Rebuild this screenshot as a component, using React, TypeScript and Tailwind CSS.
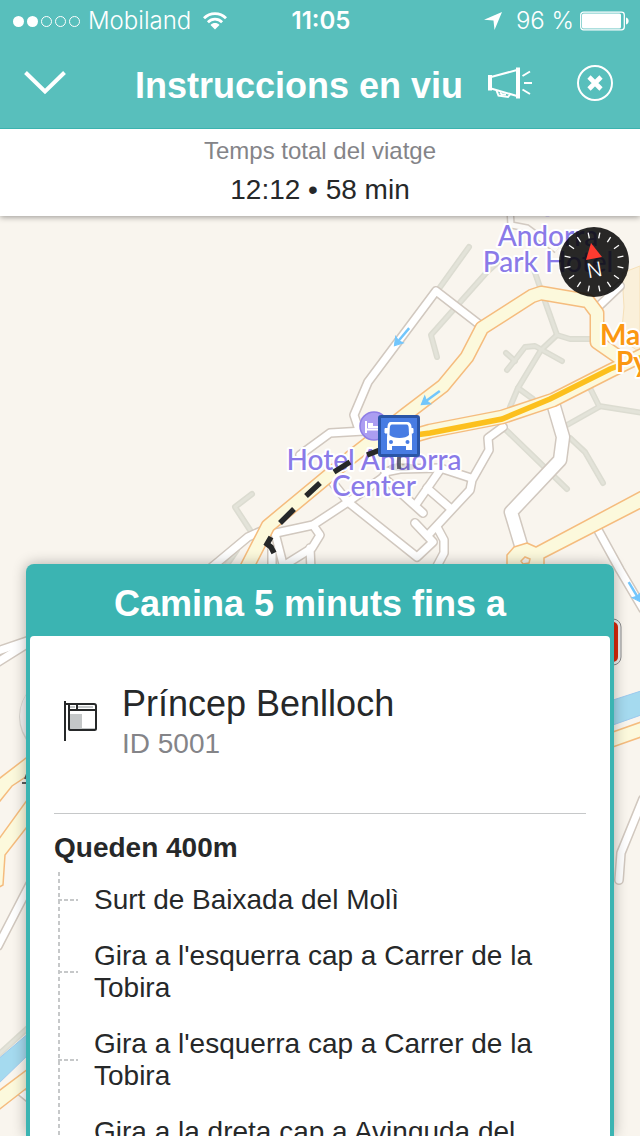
import React from 'react';

const steps = [
  "Surt de Baixada del Molì",
  "Gira a l'esquerra cap a Carrer de la Tobira",
  "Gira a l'esquerra cap a Carrer de la Tobira",
  "Gira a la dreta cap a Avinguda del",
];

// Road geometry, in map units
const lanes = [
  'M469 247L438 290',
  'M497 263L487 272L431 335L437 357',
  'M533 267L541 290L557 335L570 339H590',
  'M557 335L541 350L518 388L510 407',
  'M507 370L515 360L525 347L535 346L562 361',
  'M506 353L515 361',
  'M518 388L533 399',
  'M590 388L599 406L643 413',
  'M599 407L567 425',
  'M506 430L567 489',
  'M570 438L585 452L603 483',
  'M252 494L235 507L250 530',
  'M237 550L226 566',
  'M628 358L643 354',
  'M-2 1055L30 1026',
];

const streets = [
  'M480 325L436 291L368 382L354 415L359 430',
  'M300 455L330 433L364 431',
  'M196 580L218 562L248 537L266 529',
  'M276 533L313 525L348 502L385 476',
  'M313 525L320 535L312 548L288 563L270 575',
  'M310 548L311 570',
  'M275 533L284 568',
  'M272 550V570',
  'M348 502L333 483',
  'M348 502L417 557L433 542L415 523',
  'M383 477L423 513',
  'M417 503L440 470',
  'M427 488L450 508',
  'M385 472L400 469L440 468L471 478',
  'M503 427L488 438L489 450L472 480L470 490L430 533',
  'M437 527L444 540V553L436 568',
  'M598 530L620 570L643 609',
  'M643 799L621 853L619 880',
  'M600 305L620 286',
  'M-2 651L30 640',
  'M-2 662L30 642',
  'M-2 946L30 884',
  'M18 1089L34 1102',
];

const upperRoads = [
  'M247 567L268 526L350 458L405 415L443 386L467 357L482 328L532 296L541 293L588 301L597 313V342L620 358',
  'M378 446L430 431L502 417L553 400L610 371L645 354',
];

function RoadLayer({ roads, casing, fill, width }: { roads: string[]; casing: string; fill: string; width: number }) {
  return (
    <g fill="none" strokeLinecap="round" strokeLinejoin="round">
      {roads.map((d) => (
        <path key={d} d={d} stroke={casing} strokeWidth={width + 3} />
      ))}
      {roads.map((d) => (
        <path key={d} d={d} stroke={fill} strokeWidth={width} />
      ))}
    </g>
  );
}

function Arrow({ x, y, angle }: { x: number; y: number; angle: number }) {
  return (
    <g transform={`translate(${x} ${y}) rotate(${angle})`}>
      <path d="M2 0H22" stroke="#72c6fc" strokeWidth="2.500" />
      <path d="M-1 0L7 -5L5.500 0L7 5Z" fill="#72c6fc" stroke="#72c6fc" />
    </g>
  );
}

function Compass() {
  return (
    <g transform="translate(594 262)">
      <circle r="35" fill="#080808" fillOpacity="0.87" />
      {Array.from({ length: 16 }, (_, i) => (
        <path key={i} d="M0 -30V-24" stroke="#fff" strokeWidth="1.3" transform={`rotate(${i * 22.5 + 11.25})`} />
      ))}
      <path d="M-3 -19L-8 -2L8 -5Z" fill="#ff3b30" />
      <text
        x="-1"
        y="15"
        textAnchor="middle"
        transform="rotate(-10)"
        fill="#fff"
        className="font-['Inter',sans-serif] text-[20px] font-light"
      >
        N
      </text>
    </g>
  );
}

function BusMarker() {
  return (
    <g>
      <ellipse cx="402" cy="467" rx="14" ry="4" fill="#000" opacity="0.12" />
      <path d="M399 457V469" stroke="#555" strokeWidth="4" opacity="0.8" />
      <rect x="379.5" y="416.5" width="39" height="39" rx="1.5" fill="#477ce3" stroke="#2a55a6" strokeWidth="3" />
      <path
        d="M391 422H407C410 422 411.500 424 411.500 427L412 438V450H406V446H392V450H387V438L387.500 427C387.500 424 388.500 422 391 422Z"
        fill="#fff"
      />
      <path d="M385 428.500H388V433H385ZM411 428.500H413V433H411Z" fill="#fff" stroke="#fff" strokeWidth="1" />
      <path d="M392 424.500H406.500C408 424.500 408.500 426 408.700 428L409 435C406 439 393 439 389.500 435L389.800 428C390 426 390.500 424.500 392 424.500Z" fill="#477ce3" />
      <circle cx="391" cy="442" r="2" fill="#477ce3" />
      <circle cx="407.500" cy="442" r="2" fill="#477ce3" />
    </g>
  );
}

function MapView() {
  return (
    <svg
      className="absolute inset-0 size-full font-['Lato','Noto_Sans',sans-serif] text-[28px] font-medium"
      viewBox="0 216 640 920"
      preserveAspectRatio="xMidYMin slice"
      role="img"
      aria-label="Mapa"
    >
      <rect y="216" width="640" height="920" fill="#f9f5ee" />
      <path d="M640 266L622 273L624 307L621 340L640 352Z" fill="#faf0da" stroke="#f6e0b8" />

      <RoadLayer roads={lanes} casing="#dcdcd1" fill="#e3e3d9" width={3} />

      <path d="M510 208L511 225L527 228L557 250" fill="none" stroke="#d3cbc3" strokeWidth="8" />
      <path d="M510 208L511 225L527 228L557 250" fill="none" stroke="#fbf9f6" strokeWidth="5" />

      <RoadLayer roads={streets} casing="#d1c8bf" fill="#fff" width={7} />
      <RoadLayer
        roads={['M553 403L563 437L560 460L511 512L523 552']}
        casing="#d1c8bf"
        fill="#fff"
        width={12}
      />

      <RoadLayer roads={upperRoads} casing="#f5bc7e" fill="#fcf9dc" width={12} />
      <path
        d="M514 547L507 555V574H544V558L645 506V489L536 547L527 543Z"
        fill="#fcf9dc"
        stroke="#f5bc7e"
        strokeWidth="1.5"
        strokeLinejoin="round"
      />
      <path d="M521 561L525 557L530 559L529 563L523 564Z" fill="#f9f5ee" stroke="#f5bc7e" strokeWidth="1.5" />
      <path
        d="M400 437L430 433L502 419L550 399L610 369L645 356"
        fill="none"
        stroke="#fcc01d"
        strokeWidth="5.500"
      />

      <g fill="#fcf9dc" stroke="#f5bc7e" strokeWidth="1.5">
        <path d="M-4 781L30 755V774L12 786L-4 806Z" />
        <path d="M-4 843L30 796V823L5 855L3 885L-4 889Z" />
        <path d="M-4 1093L32 1066V1084L-4 1112Z" />
        <path d="M610 733L644 721V736L610 748Z" />
      </g>
      <g fill="#a5daef" stroke="#9cc9ee">
        <path d="M-4 1061L30 1032V1053L-4 1086Z" />
        <path d="M610 701L644 690V714L610 726Z" />
      </g>

      <Arrow x={422} y={404} angle={-36} />
      <Arrow x={395} y={345} angle={-50} />
      <Arrow x={640} y={601} angle={-121} />

      <circle cx="60" cy="717" r="41" fill="#000" opacity="0.12" />
      <circle cx="60" cy="716" r="40" fill="#f3f3f3" />
      <rect x="580" y="619" width="41" height="46" rx="8" fill="#eee" stroke="#8b8b8b" />
      <rect x="580" y="622" width="38" height="40" rx="5" fill="#d9290b" />
      <path d="M22 783H34M25 779L30 766" stroke="#5d5d5d" strokeWidth="2" />

      <circle cx="374" cy="426" r="14" fill="#ab9df1" stroke="#8f7ee6" strokeWidth="1.5" />
      <path d="M366 421V433M366 429.500H382M369 424H372V427H369ZM373 427H382" fill="#fff" stroke="#fff" strokeWidth="2" />

      <g stroke="#fff" strokeWidth="4" strokeLinejoin="round" paintOrder="stroke" textAnchor="middle">
        <g fill="#8a7ae8">
          <text x="374" y="470">Hotel Andorra</text>
          <text x="374" y="496">Center</text>
          <text x="548" y="246">Andorra</text>
          <text x="548" y="272">Park Hotel</text>
          <path d="M541 214C544 217 551 217 554 214L553 211H542Z" stroke="none" />
        </g>
        <g fill="#fb9812" textAnchor="start" fontWeight="700">
          <text x="600" y="345">Ma</text>
          <text x="616" y="372">Py</text>
        </g>
      </g>

      <path
        d="M380 450L367 455M350 462L334 472M320 483L306 496M294 509L280 523M271 537L267 544L271 547L274 553"
        fill="none"
        stroke="#262829"
        strokeWidth="5.500"
      />

      <BusMarker />
      <Compass />
    </svg>
  );
}

function StatusBar() {
  return (
    <div className="grid h-10 grid-cols-[1fr_auto_1fr] items-center pl-[13px] pr-[11px] pt-0.5 font-['Inter',sans-serif] text-2xl">
      <div className="flex items-center gap-2">
        <div className="flex gap-[3px]">
          <span className="size-[11px] rounded-full bg-white" />
          <span className="size-[11px] rounded-full bg-white" />
          <span className="size-[11px] rounded-full border border-white" />
          <span className="size-[11px] rounded-full border border-white" />
          <span className="size-[11px] rounded-full border border-white" />
        </div>
        <span className="font-light">Mobiland</span>
        <svg className="ml-1 h-[18px] w-6" viewBox="0 0 24 18" fill="none" stroke="#fff" strokeWidth="2.800">
          <path d="M1 6.200C7 0 17 0 23 6.200M4.900 10.200C9 6.200 15 6.200 19.100 10.200" />
          <path d="M7.500 13C10 10.400 14 10.400 16.500 13L12 17.600Z" fill="#fff" stroke="none" />
        </svg>
      </div>
      <span className="font-semibold">11:05</span>
      <div className="flex items-center justify-end">
        <svg className="mr-[14px] h-[18px] w-[18px]" viewBox="0 0 18 18" fill="#fff">
          <path d="M18 0L10.500 18L9.500 8.500L0 7.800Z" />
        </svg>
        <span className="mr-1.5 font-light">96 %</span>
        <svg className="h-5 w-[49px]" viewBox="0 0 49 20">
          <rect x="0.700" y="1.200" width="43.600" height="17.600" rx="2.800" fill="none" stroke="#fff" strokeWidth="1.300" />
          <rect x="2" y="2.500" width="39" height="15" rx="1.500" fill="#fff" />
          <path d="M46 6.500C49.500 7 49.500 13 46 13.500Z" fill="#fff" />
        </svg>
      </div>
    </div>
  );
}

function Header() {
  return (
    <header className="relative z-20 border-b border-[#3bb3af] bg-[#58bfbc] text-white">
      <StatusBar />
      <div className="flex h-[88px] items-center pb-0.5 pl-6 pr-[27px]">
        <button type="button" aria-label="Tanca el detall">
          <svg className="h-6 w-[42px]" viewBox="0 0 42 24" fill="none" stroke="#fff" strokeWidth="4">
            <path d="M1.500 1.500L21 20.500L40.500 1.500" />
          </svg>
        </button>
        <h1 className="flex-1 pr-6 pt-1.5 text-right text-4xl font-bold leading-10">Instruccions en viu</h1>
        <button type="button" aria-label="Veu">
          <svg className="h-[34px] w-[46px]" viewBox="0 0 46 34" fill="none" stroke="#fff" strokeWidth="2">
            <path d="M3 9V24.500" strokeWidth="4" />
            <path d="M31 1.500V32.500" strokeWidth="4" />
            <path d="M4 11L30 4M4 22.500L30 30" />
            <path d="M9.500 24.500L11.500 29.500L21 31L23 28.500" />
            <path d="M13 26.500L15 28.500H19" />
            <path d="M35.500 10L43 5.500M37 17H45M35.500 23.500L43 28" />
          </svg>
        </button>
        <button type="button" aria-label="Tanca" className="ml-11">
          <svg className="size-9" viewBox="0 0 36 36" fill="none" stroke="#fff">
            <circle cx="18" cy="18" r="17" strokeWidth="2" />
            <path d="M12 12L24 24M24 12L12 24" strokeWidth="4.600" />
          </svg>
        </button>
      </div>
    </header>
  );
}

function StopFlag() {
  return (
    <svg className="h-10 w-[34px] shrink-0" viewBox="0 0 34 40" fill="none">
      <path d="M5 13H18V27H31V29H5Z" fill="#c4c7c8" />
      <path d="M6 6H11M14 6H29" stroke="#c4c7c8" strokeWidth="2" />
      <path d="M1 0V40M1 3H30C31.500 3 32 3.500 32 5V27.500C32 28.500 31.500 29 30.500 29H7C6 29 5 28.500 5 28V3M5 9H32M13 3V9" stroke="#262829" strokeWidth="2" />
    </svg>
  );
}

function StepCard() {
  return (
    <section className="relative mx-[26px] mt-[348px] flex min-h-0 flex-1 flex-col overflow-hidden rounded-t-lg bg-[#3bb4b2] px-1 pt-1 shadow-[0_0_14px_rgba(0,0,0,0.3)]">
      <h2 className="pb-3 pl-0 pr-5 pt-4 text-center text-4xl font-bold leading-10 text-white">
        Camina 5 minuts fins a
      </h2>
      <div className="flex-1 rounded-t-sm bg-white px-6">
        <div className="flex items-center gap-6 border-b border-[#c6c8c9] pb-[51px] pl-2.5 pt-11">
          <StopFlag />
          <div className="pt-1">
            <h3 className="text-4xl leading-10">Príncep Benlloch</h3>
            <p className="mt-0.5 text-[28px] leading-9 text-[#848488]">ID 5001</p>
          </div>
        </div>
        <h3 className="mt-[18px] text-[28px] font-bold leading-8">Queden 400m</h3>
        <ul className="ml-1 mt-2 bg-[repeating-linear-gradient(to_bottom,#c6c8c9_0_4px,transparent_4px_7px)] bg-[length:2px_100%] bg-no-repeat py-3">
          {steps.map((step, i) => (
            <li key={i} className="mb-6 flex gap-4 text-[28px] leading-8 last:min-h-16">
              <span className="h-0.5 w-5 shrink-0 self-center bg-[repeating-linear-gradient(to_right,#c6c8c9_0_4px,transparent_4px_6px)]" />
              <span>{step}</span>
            </li>
          ))}
        </ul>
      </div>
    </section>
  );
}

export default function App() {
  return (
    <div className="flex h-screen flex-col overflow-hidden font-['Liberation_Sans',Arial,sans-serif] text-[#262829]">
      <Header />
      <div className="relative z-10 bg-white pb-2.5 pt-2 text-center shadow-[0_1px_6px_rgba(0,0,0,0.4)]">
        <p className="text-2xl leading-7 text-[#848488]">Temps total del viatge</p>
        <p className="mt-[9px] text-[28px] leading-8">12:12 • 58 min</p>
      </div>
      <main className="relative flex min-h-0 flex-1 flex-col overflow-hidden">
        <MapView />
        <StepCard />
      </main>
    </div>
  );
}
